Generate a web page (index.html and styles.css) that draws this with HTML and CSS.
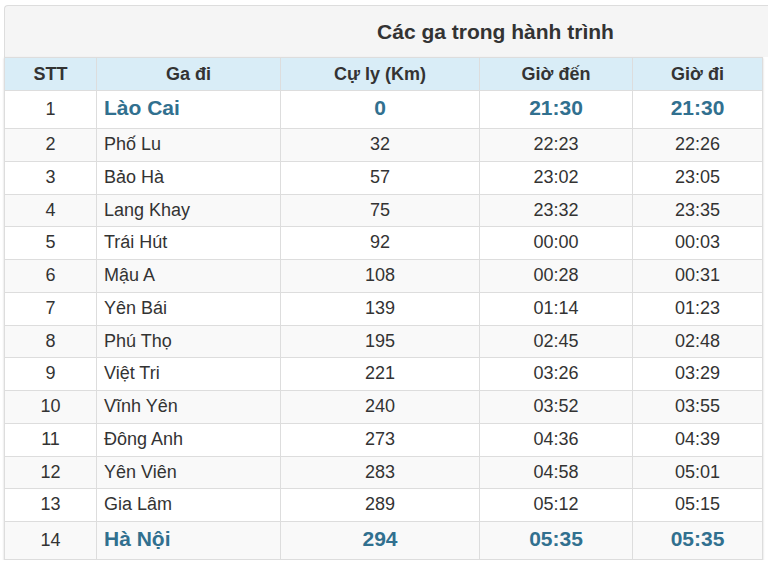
FILE: index.html
```html
<!DOCTYPE html>
<html lang="vi">
<head>
<meta charset="utf-8">
<title>Các ga trong hành trình</title>
<link rel="stylesheet" href="styles.css">
</head>
<body>
<div class="panel">
  <div class="panel-heading"><h3 class="title">Các ga trong hành trình</h3></div>
  <table class="stations">
    <colgroup>
      <col class="c-stt"><col class="c-name"><col class="c-km"><col class="c-arr"><col class="c-dep">
    </colgroup>
    <thead>
      <tr><th>STT</th><th>Ga đi</th><th>Cự ly (Km)</th><th>Giờ đến</th><th>Giờ đi</th></tr>
    </thead>
    <tbody>
      <tr class="major"><td class="stt">1</td><td class="name">Lào Cai</td><td>0</td><td>21:30</td><td>21:30</td></tr>
      <tr><td class="stt">2</td><td class="name">Phố Lu</td><td>32</td><td>22:23</td><td>22:26</td></tr>
      <tr><td class="stt">3</td><td class="name">Bảo Hà</td><td>57</td><td>23:02</td><td>23:05</td></tr>
      <tr><td class="stt">4</td><td class="name">Lang Khay</td><td>75</td><td>23:32</td><td>23:35</td></tr>
      <tr><td class="stt">5</td><td class="name">Trái Hút</td><td>92</td><td>00:00</td><td>00:03</td></tr>
      <tr><td class="stt">6</td><td class="name">Mậu A</td><td>108</td><td>00:28</td><td>00:31</td></tr>
      <tr><td class="stt">7</td><td class="name">Yên Bái</td><td>139</td><td>01:14</td><td>01:23</td></tr>
      <tr><td class="stt">8</td><td class="name">Phú Thọ</td><td>195</td><td>02:45</td><td>02:48</td></tr>
      <tr><td class="stt">9</td><td class="name">Việt Tri</td><td>221</td><td>03:26</td><td>03:29</td></tr>
      <tr><td class="stt">10</td><td class="name">Vĩnh Yên</td><td>240</td><td>03:52</td><td>03:55</td></tr>
      <tr><td class="stt">11</td><td class="name">Đông Anh</td><td>273</td><td>04:36</td><td>04:39</td></tr>
      <tr><td class="stt">12</td><td class="name">Yên Viên</td><td>283</td><td>04:58</td><td>05:01</td></tr>
      <tr><td class="stt">13</td><td class="name">Gia Lâm</td><td>289</td><td>05:12</td><td>05:15</td></tr>
      <tr class="major"><td class="stt">14</td><td class="name">Hà Nội</td><td>294</td><td>05:35</td><td>05:35</td></tr>
    </tbody>
  </table>
</div>
</body>
</html>
```
FILE: styles.css
```css
html, body {
  margin: 0;
  padding: 0;
  background: #fff;
}
body {
  font-family: "Liberation Sans", Arial, sans-serif;
  color: #333;
  font-size: 18px;
}
.panel {
  margin: 5px 0 0 4px;
}
.panel-heading {
  height: 51px;
  padding-left: 218px;
  background: #f5f5f5;
  border-top: 1px solid #ddd;
  border-left: 1px solid #ddd;
  border-top-left-radius: 4px;
  display: flex;
  align-items: center;
  justify-content: center;
}
.title {
  margin: 0;
  font-size: 21px;
  font-weight: bold;
  color: #333;
  line-height: 24px;
}
.stations {
  width: 758px;
  border-collapse: collapse;
  table-layout: fixed;
  box-shadow: 0 1px 2px rgba(0, 0, 0, 0.18);
}
.c-stt { width: 92px; }
.c-name { width: 184px; }
.c-km { width: 199px; }
.c-arr { width: 153px; }
.c-dep { width: 130px; }
.stations th,
.stations td {
  border: 1px solid #ddd;
  text-align: center;
  padding: 6px 8px;
  line-height: 19.75px;
}
.stations th {
  background: #d9edf7;
  font-weight: bold;
  line-height: 20px;
}
.stations td.name {
  text-align: left;
  padding-left: 7px;
}
.stations tbody tr:nth-child(even) td {
  background: #f9f9f9;
}
.stations tr.major td {
  font-size: 21px;
  font-weight: bold;
  color: #31708f;
  line-height: 25px;
  padding-top: 4px;
  padding-bottom: 8px;
}
.stations tr.major td.stt {
  font-size: 18px;
  font-weight: normal;
  color: #333;
  padding-top: 6px;
  padding-bottom: 6px;
}
```
